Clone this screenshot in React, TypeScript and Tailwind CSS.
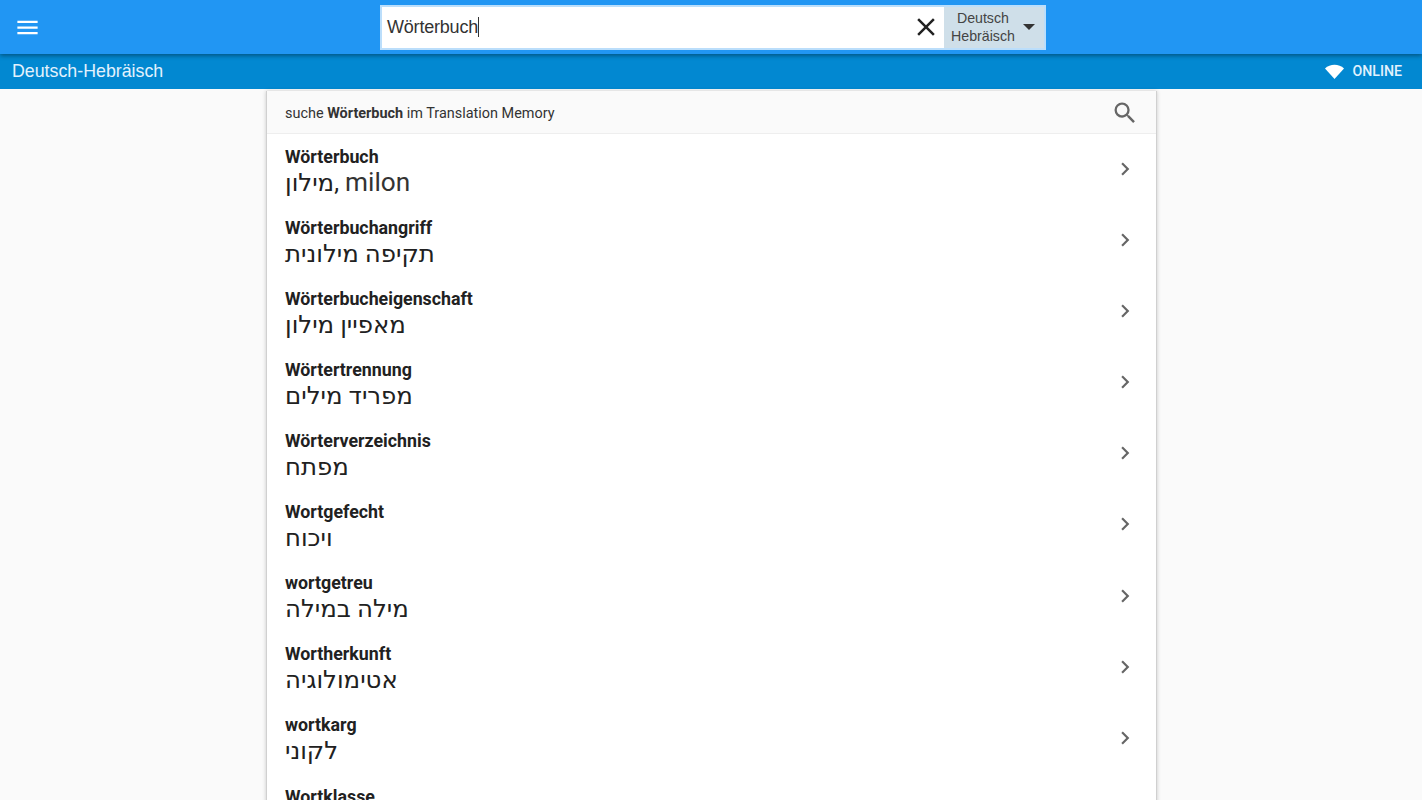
import { MdMenu, MdClose, MdSearch, MdChevronRight } from "react-icons/md";

const rows: [string, string, string?][] = [
  ["Wörterbuch", "מילון, ", "milon"],
  ["Wörterbuchangriff", "תקיפה מילונית"],
  ["Wörterbucheigenschaft", "מאפיין מילון"],
  ["Wörtertrennung", "מפריד מילים"],
  ["Wörterverzeichnis", "מפתח"],
  ["Wortgefecht", "ויכוח"],
  ["wortgetreu", "מילה במילה"],
  ["Wortherkunft", "אטימולוגיה"],
  ["wortkarg", "לקוני"],
  ["Wortklasse", "חלק דיבר"],
];

export default function App() {
  return (
    <div className="h-[800px] overflow-hidden bg-[#fafafa] font-['Roboto','Liberation_Sans',sans-serif] text-[#212121]">
      <header className="relative z-10 flex h-[54px] items-center bg-[#2196f3] shadow-[0_2px_4px_rgba(0,0,0,0.35)]">
        <button className="ml-[14px] text-white">
          <MdMenu size={27} />
        </button>
        <div className="ml-[339px] flex h-[45px] w-[666px] border-2 border-[#bbdefb] bg-white font-['Liberation_Sans',sans-serif]">
          <div className="flex flex-1 items-center pl-[5px] text-[18px] tracking-[-0.2px] text-[#333]">
            Wörterbuch<span className="h-[20px] w-px bg-[#333]" />
          </div>
          <button className="flex w-[36px] items-center justify-center text-[#212121]">
            <MdClose size={30} />
          </button>
          <div className="flex w-[100px] items-center bg-[#cfdfe9] pl-[7px] text-[#444]">
            <div className="text-center text-[14.2px] leading-[18px]">
              <div>Deutsch</div>
              <div>Hebräisch</div>
            </div>
            <span className="ml-[8px] h-0 w-0 border-x-[6px] border-t-[6px] border-x-transparent border-t-[#333]" />
          </div>
        </div>
      </header>
      <div className="flex h-[35px] items-center justify-between bg-[#0288d1] pl-3 pr-[20px] text-[#e3f2fd]">
        <span className="font-['Liberation_Sans',sans-serif] text-[17.8px]">Deutsch-Hebräisch</span>
        <span className="flex items-center gap-[8px] text-[14.2px] font-medium">
          <svg width="19" height="16" viewBox="0 0 19 16">
            <path d="M0 5.5 C5 0.5 14 0.5 19 5.5 L9.5 16 Z" fill="#fff" />
          </svg>
          ONLINE
        </span>
      </div>
      <main className="mt-[2px] ml-[266px] w-[891px] border-x border-[#d0d0d0] bg-white shadow-[0_0_4px_rgba(0,0,0,0.2)]">
        <div className="flex h-[43px] items-center justify-between border-b border-[#eeeeee] bg-[#fafafa] pl-[18px] pr-[17px] text-[14.45px] text-[#333]">
          <span className="relative top-[2px]">
            suche <b className="font-bold">Wörterbuch</b> im Translation Memory
          </span>
          <MdSearch size={28} className="relative top-[1px] text-[#666]" />
        </div>
        {rows.map(([de, he, latin]) => (
          <div key={de} className="flex h-[71.1px] items-center justify-between pl-[18px] pr-[18px]">
            <div className="relative top-[1.7px] flex flex-col">
              <span className="text-[17.8px] leading-[22px] font-bold text-[#212121]">{de}</span>
              <span className="font-['Roboto','DejaVu_Sans',sans-serif] text-[24.4px] leading-[29px] text-[#212121]">
                {he}
                {latin && <span className="text-[26.2px] text-[#333]">{latin}</span>}
              </span>
            </div>
            <MdChevronRight size={26} className="relative top-[-0.6px] text-[#666]" />
          </div>
        ))}
      </main>
    </div>
  );
}
